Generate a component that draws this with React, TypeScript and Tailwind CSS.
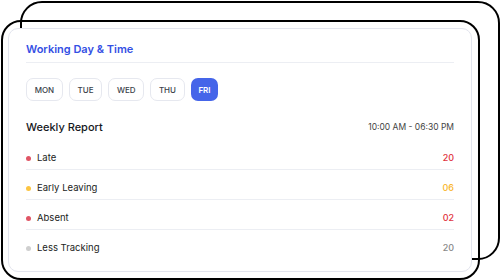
import React from "react";

const days = ["MON", "TUE", "WED", "THU", "FRI"];

const rows = [
  { label: "Late", value: "20", dot: "bg-[#e05565]", text: "text-[#df3440]" },
  { label: "Early Leaving", value: "06", dot: "bg-[#fcc542]", text: "text-[#f9b62c]" },
  { label: "Absent", value: "02", dot: "bg-[#e05565]", text: "text-[#df3440]" },
  { label: "Less Tracking", value: "20", dot: "bg-[#cfcfcf]", text: "text-[#8a8a8a]" },
];

export default function App() {
  return (
    <div
      className="relative w-[500px] h-[280px] overflow-hidden bg-white"
      style={{ fontFamily: "Inter, 'Noto Sans', sans-serif" }}
    >
      {/* back frame */}
      <div className="absolute left-[20px] top-[1px] w-[480px] h-[259px] rounded-[22px] border-2 border-black" />
      {/* front frame */}
      <div className="absolute left-[1px] top-[20px] w-[479px] h-[260px] rounded-[20px] border-2 border-black" />

      <div className="pl-2 pt-7">
        <div className="relative z-10 w-[464px] h-[244px] rounded-[10px] border border-[#e3e5ee] bg-white px-[17px]">
          <div className="pt-3 pb-[5px] border-b border-[#eceef3]">
            <p className="h-4 leading-4 text-[11px] font-semibold text-[#3450e4]">
              Working Day &amp; Time
            </p>
          </div>

          <div className="mt-[15px] flex gap-[6px]">
            {days.map((d) => (
              <button
                key={d}
                className={
                  d === "FRI"
                    ? "h-[23px] px-[7.7px] rounded-[7px] bg-[#4565e9] text-[8px] font-semibold text-white"
                    : "h-[23px] px-[7.7px] rounded-[7px] border border-[#e6e8ef] bg-white text-[8px] font-medium text-[#3b3f4a]"
                }
              >
                {d}
              </button>
            ))}
          </div>

          <div className="mt-[18px] flex items-center justify-between">
            <p className="h-4 leading-4 text-[11px] font-medium text-[#16181d]">Weekly Report</p>
            <p className="text-[8.5px] text-[#444]">10:00 AM - 06:30 PM</p>
          </div>

          <div className="mt-[5px]">
            {rows.map((r, i) => (
              <div
                key={r.label}
                className={
                  i < rows.length - 1
                    ? "flex items-center justify-between pt-[11px] pb-[4px] border-b border-[#eceef3]"
                    : "flex items-center justify-between pt-[11px] pb-[4px]"
                }
              >
                <div className="flex items-center gap-[6px] h-[14px]">
                  <span className={`w-[5px] h-[5px] rounded-full ${r.dot}`} />
                  <span className="text-[9.5px] text-[#1b1d22]">{r.label}</span>
                </div>
                <span className={`text-[9px] font-medium ${r.text}`}>{r.value}</span>
              </div>
            ))}
          </div>
        </div>
      </div>
    </div>
  );
}
